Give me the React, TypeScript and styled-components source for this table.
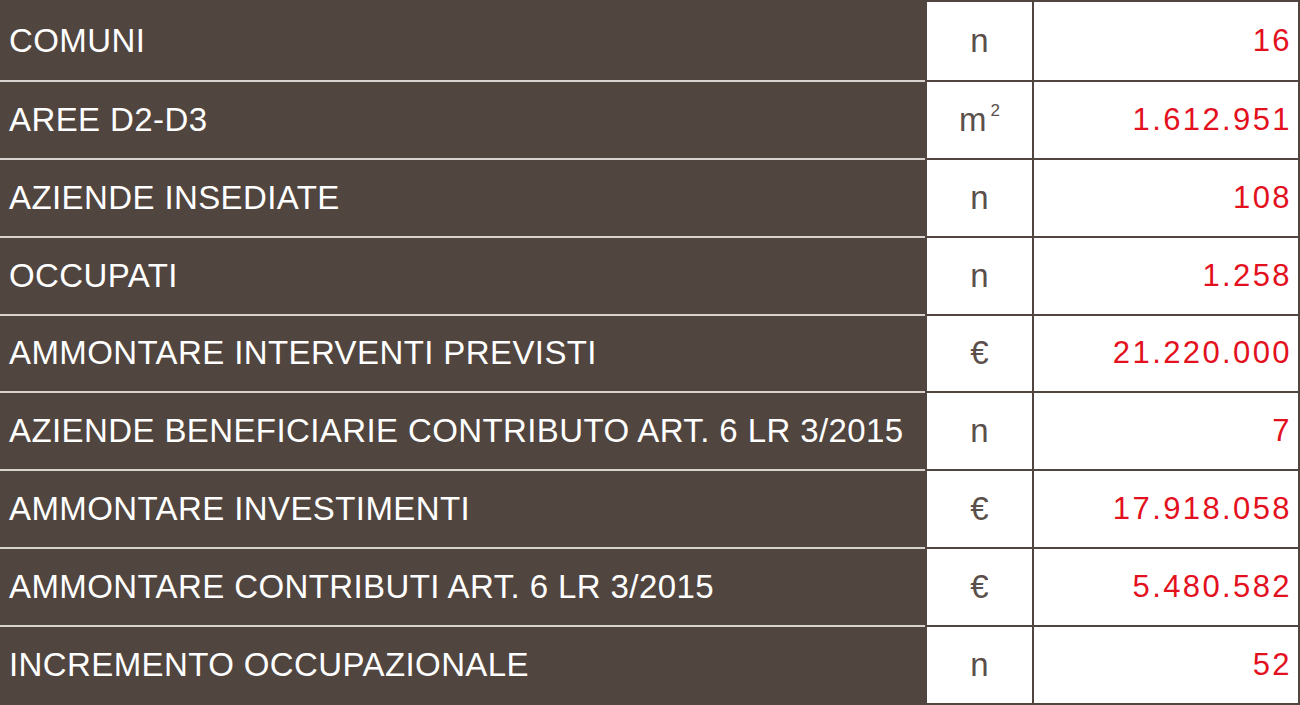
import React from "react";
import styled, { createGlobalStyle } from "styled-components";

const Brown = "#51453f";
const Red = "#e3101d";

const GlobalStyle = createGlobalStyle`
  html, body {
    margin: 0;
    padding: 0;
    background: #ffffff;
  }
`;

const Table = styled.div`
  box-sizing: border-box;
  width: 1300px;
  height: 705px;
  display: grid;
  grid-template-columns: 925px 107px 1fr;
  grid-template-rows: repeat(9, 1fr);
  font-family: "Liberation Sans", Arial, sans-serif;
  border-top: 2px solid ${Brown};
  border-bottom: 2px solid ${Brown};
  background: ${Brown};
`;

const Label = styled.div<{ first?: boolean }>`
  box-sizing: border-box;
  display: flex;
  align-items: center;
  padding-left: 9px;
  color: #ffffff;
  font-size: 33px;
  letter-spacing: 0.4px;
  background: ${Brown};
  border-top: ${({ first }) => (first ? "none" : "2px solid #d8d3cf")};
  white-space: nowrap;
`;

const Unit = styled.div<{ first?: boolean }>`
  box-sizing: border-box;
  display: flex;
  align-items: center;
  justify-content: center;
  color: #5a4f4a;
  font-size: 33px;
  background: #ffffff;
  border-top: ${({ first }) => (first ? "none" : `2px solid ${Brown}`)};
  border-left: 2px solid ${Brown};

  sup {
    font-size: 17px;
    line-height: 0;
    position: relative;
    top: -9px;
    margin-left: 4px;
  }
`;

const Value = styled.div<{ first?: boolean }>`
  box-sizing: border-box;
  display: flex;
  align-items: center;
  justify-content: flex-end;
  padding-right: 6px;
  color: ${Red};
  font-size: 31px;
  letter-spacing: 2.4px;
  background: #ffffff;
  border-top: ${({ first }) => (first ? "none" : `2px solid ${Brown}`)};
  border-left: 2px solid ${Brown};
  border-right: 2px solid ${Brown};
`;

type Row = { label: string; unit: React.ReactNode; value: string };

const rows: Row[] = [
  { label: "COMUNI", unit: "n", value: "16" },
  {
    label: "AREE D2-D3",
    unit: (
      <>
        m<sup>2</sup>
      </>
    ),
    value: "1.612.951",
  },
  { label: "AZIENDE INSEDIATE", unit: "n", value: "108" },
  { label: "OCCUPATI", unit: "n", value: "1.258" },
  { label: "AMMONTARE INTERVENTI PREVISTI", unit: "€", value: "21.220.000" },
  {
    label: "AZIENDE BENEFICIARIE CONTRIBUTO ART. 6 LR 3/2015",
    unit: "n",
    value: "7",
  },
  { label: "AMMONTARE INVESTIMENTI", unit: "€", value: "17.918.058" },
  { label: "AMMONTARE CONTRIBUTI ART. 6 LR 3/2015", unit: "€", value: "5.480.582" },
  { label: "INCREMENTO OCCUPAZIONALE", unit: "n", value: "52" },
];

export default function App() {
  return (
    <>
      <GlobalStyle />
      <Table>
        {rows.map((row, i) => (
          <React.Fragment key={row.label}>
            <Label first={i === 0}>{row.label}</Label>
            <Unit first={i === 0}>{row.unit}</Unit>
            <Value first={i === 0}>{row.value}</Value>
          </React.Fragment>
        ))}
      </Table>
    </>
  );
}
